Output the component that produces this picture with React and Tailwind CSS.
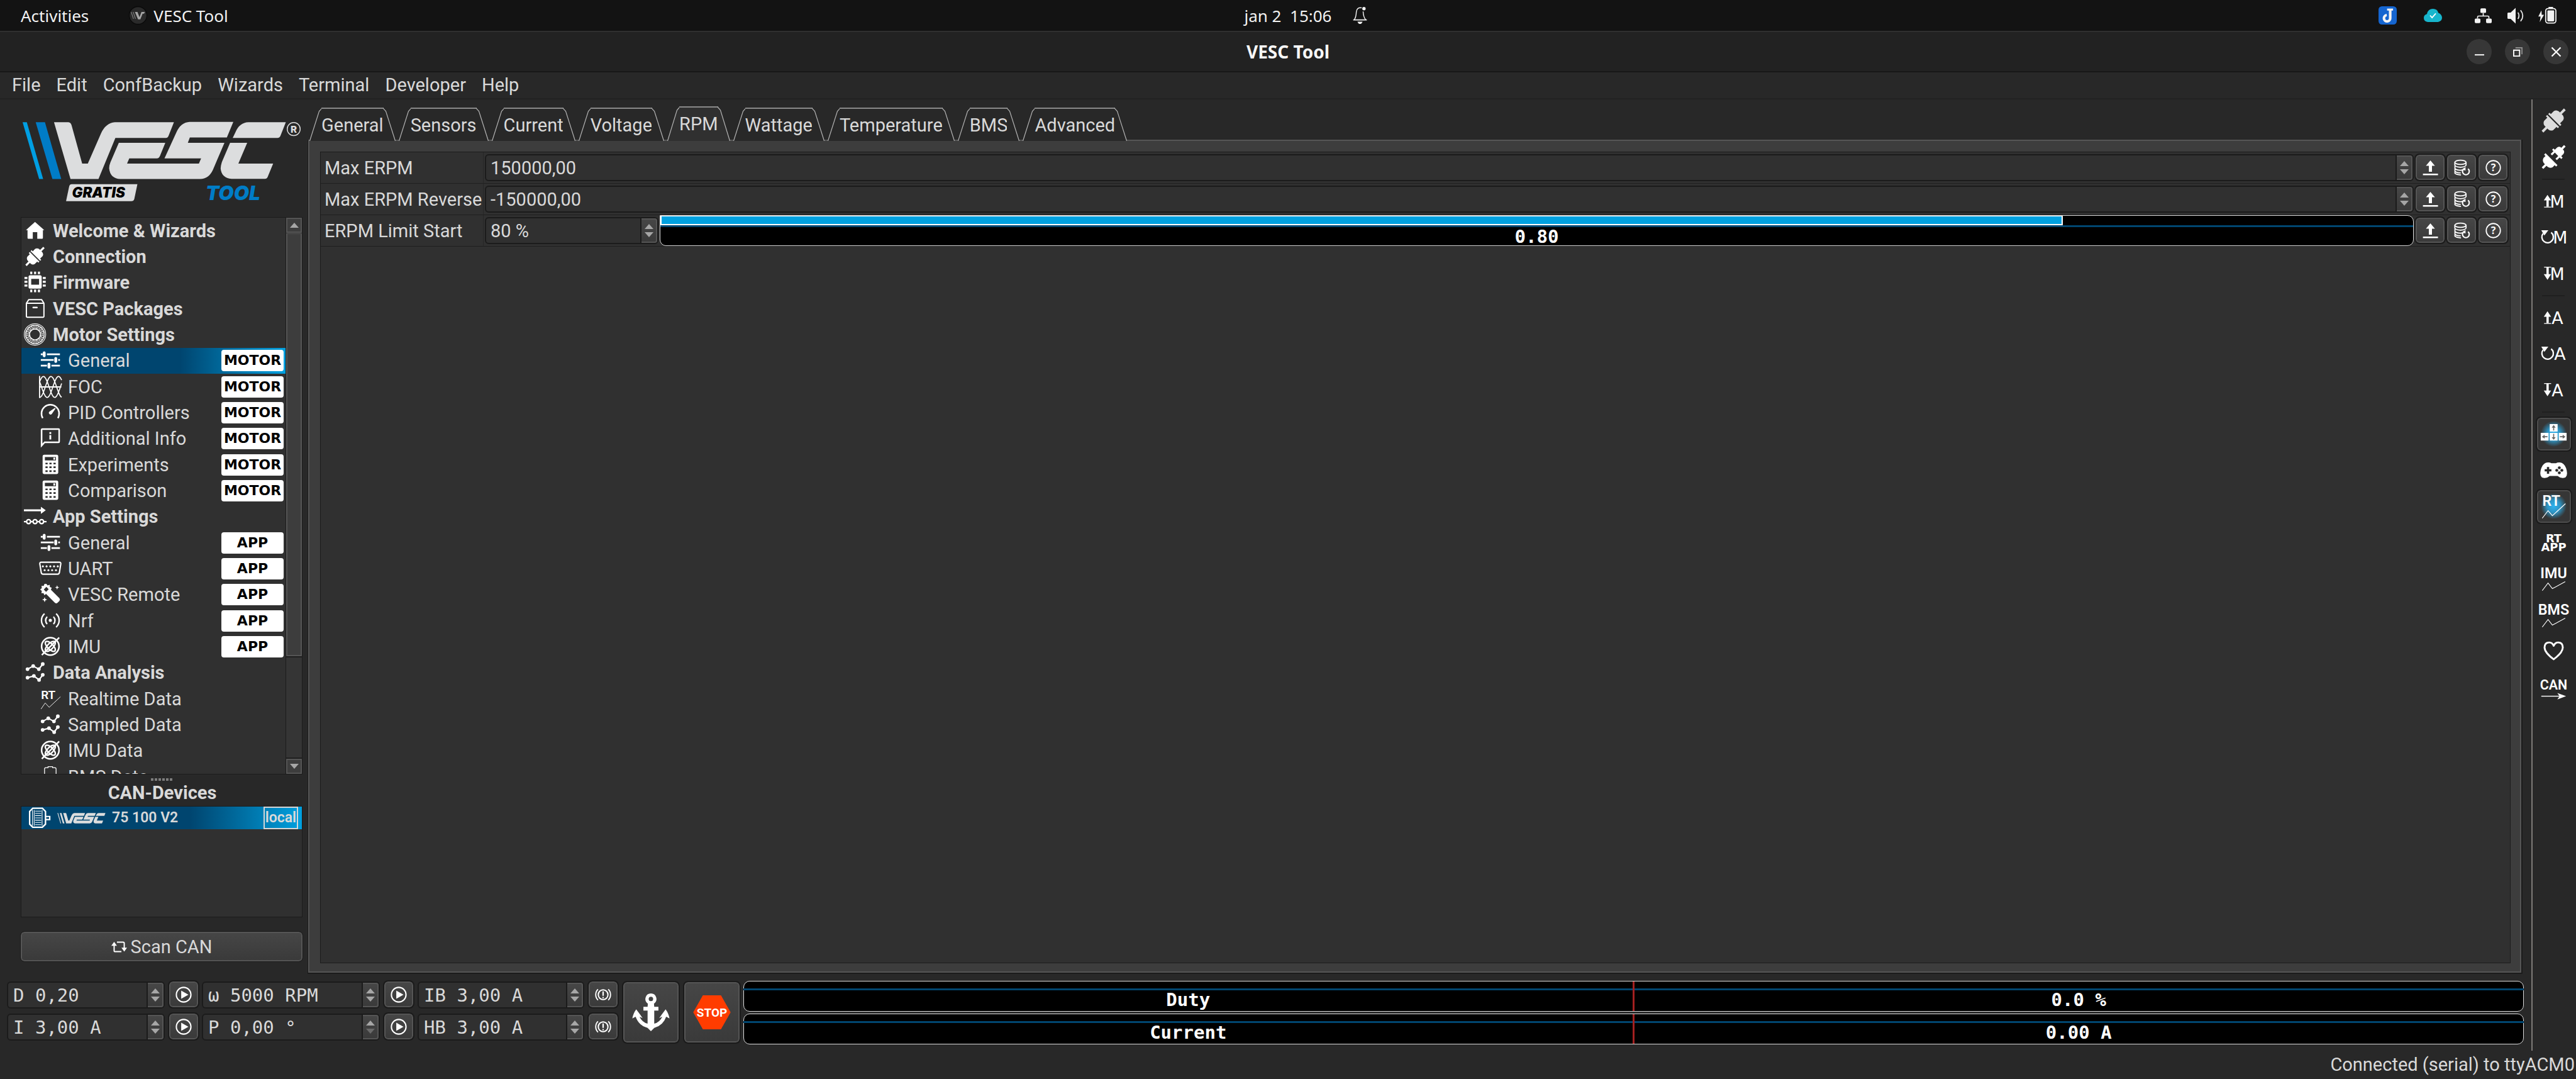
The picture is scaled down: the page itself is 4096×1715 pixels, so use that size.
import React from "react";

/* ---------- shared icon frame ---------- */

const Svg = ({ box = "0 0 40 40", className = "size-9", children }) => (
  <svg viewBox={box} className={className + " shrink-0 overflow-visible"} fill="none" aria-hidden="true">
    {children}
  </svg>
);

/* ---------- logo ---------- */

const WordmarkShapes = ({ first = "#009fe3", second = "#007cc6", fill = "#dcddde" }) => (
  <g transform="scale(0.35714 0.33333)">
    <path fill={first} d="M110 648H131L212 950H192Z" />
    <path fill={second} d="M175 648H221L302 950H258Z" />
    <path
      fill={fill}
      d="M266 648H338Q349 649 353 663L406 868H434L500 706Q524 652 568 648H862L836 718Q832 731 822 731H571L487 950H348Z"
    />
    <path
      fill={fill}
      d="M588 757H819L793 826Q788 840 777 840H640L629 868H986L997 840H815L874 702Q896 648 940 646H1157L1125 729H941L931 757H1113L1056 900Q1036 948 992 950H596Q545 948 540 893Q540 878 546 862Z"
    />
    <path fill={fill} d="M1154 731L1168 700Q1188 650 1232 648H1418L1392 718Q1388 731 1376 731Z" />
    <path
      fill={fill}
      d="M1141 757H1226L1182 868H1355L1328 938Q1324 949 1314 949H1148Q1098 945 1094 894Q1095 876 1100 860Z"
    />
  </g>
);

const Logo = () => (
  <svg viewBox="36 210 500 152" className="w-full" role="img" aria-label="VESC Tool Gratis">
    <WordmarkShapes />
    <ellipse cx="520.4" cy="228" rx="11.5" ry="11.5" fill="none" stroke="#dcddde" strokeWidth="1.6" />
    <text x="520.4" y="234" textAnchor="middle" fontSize="17" fontWeight="800" fill="#dcddde" className="font-['Inter',sans-serif]">R</text>
    <path fill="#dcddde" d="M126.4 325.7H243L237.5 352Q236.500 356 232 356H116.400L122 329.500Q123 325.700 126.400 325.700Z" />
    <text x="127" y="350" fontSize="25" fontWeight="900" fontStyle="italic" fill="#000" className="font-['Inter',sans-serif]">GRATIS</text>
    <text x="364" y="353.500" fontSize="35" fontWeight="900" fontStyle="italic" fill="#007cc6" className="font-['Inter',sans-serif]">TOOL</text>
  </svg>
);

/* ---------- navigation icons ---------- */

const HomeIcon = () => (
  <Svg>
    <path fill="#fff" d="M19.600 4.300L36 18.700H33.600V32.500a1.500 1.500 0 0 1-1.500 1.500H23.600V22.300H15.700V34H7.900a1.500 1.500 0 0 1-1.500-1.500V18.700H3.600Z" />
  </Svg>
);

const PlugShape = ({ fill = "#fff" }) => (
  <g transform="rotate(-45)" fill={fill}>
    <path d="M1.200-15H4.500V-11.500H12Q17-10.500 18-5V-2.200H28V2.200H18V5Q17 10.500 12 11.500H4.500V15H1.200Z" />
    <path d="M-1.200-15H-4.500V-11.500H-12Q-17-10.500-18-5V-2.200H-28V2.200H-18V5Q-17 10.500-12 11.500H-4.500V15H-1.200Z" />
  </g>
);

const ConnectionIcon = () => (
  <Svg>
    <g transform="translate(19.600 19.500) scale(0.8)">
      <PlugShape />
    </g>
  </Svg>
);

const ChipIcon = () => (
  <Svg>
    <path
      fill="#fff"
      fillRule="evenodd"
      d="M11 7.300H28.600a2.800 2.800 0 0 1 2.800 2.800V28a2.800 2.800 0 0 1-2.800 2.800H11A2.800 2.800 0 0 1 8.200 28V10.100A2.800 2.800 0 0 1 11 7.300ZM12.900 13.700V24H26.800V13.700Z"
    />
    <path stroke="#fff" strokeWidth="3.600" d="M13 .7V5.300M19.800 .7V5.300M26.600 .7V5.300M13 32.500V37.300M19.800 32.500V37.300M26.600 32.500V37.300M1 12H6.200M1 18.700H6.200M1 25.500H6.200M33.400 12H38.600M33.400 18.700H38.600M33.400 25.500H38.600" />
  </Svg>
);

const PackageIcon = () => (
  <Svg>
    <path stroke="#fff" strokeWidth="2.200" strokeLinejoin="round" d="M4.400 10L8.700 3.500H31.200L35.400 10V33a1.600 1.600 0 0 1-1.600 1.600H6A1.600 1.600 0 0 1 4.400 33ZM4.400 10H35.400" />
    <path stroke="#fff" strokeWidth="2.800" strokeLinecap="round" d="M16.500 17.500H23" />
  </Svg>
);

const MotorIcon = () => (
  <Svg>
    <circle cx="19.600" cy="19.500" r="19" stroke="#fff" strokeWidth="1.200" />
    <circle cx="19.600" cy="19.500" r="16.800" stroke="#fff" strokeWidth="0.900" />
    <circle cx="19.600" cy="19.500" r="9.500" stroke="#fff" strokeWidth="1.600" />
    {[0, 30, 60, 90, 120, 150, 180, 210, 240, 270, 300, 330].map((a) => (
      <g key={a} transform={`rotate(${a} 19.600 19.500)`}>
        <path stroke="#fff" strokeWidth="1.100" d="M17.600 10V4.800L15.600 3.500H23.600L21.600 4.800V10" />
        <path stroke="#fff" strokeWidth="1" opacity="0.700" d="M19.600 10V4.500" />
      </g>
    ))}
  </Svg>
);

const TuneIcon = () => (
  <Svg>
    <path stroke="#fff" strokeWidth="3" d="M3.200 9H6.500M14 9H37M3.200 19H26M34 19H37M3.200 29H14M22 29H37" />
    <path stroke="#fff" strokeWidth="5" strokeLinecap="round" d="M9.200 6.500V11.600M29.600 16.500V21.600M17.600 26.500V31.600" />
  </Svg>
);

const wave = (phase) =>
  Array.from({ length: 40 }, (_, x) => {
    const y = 20 - 18.5 * Math.sin((x * 2 * Math.PI) / 40 + phase);
    return `${x === 0 ? "M" : "L"}${x + 1} ${y.toFixed(1)}`;
  }).join("");

const FocIcon = () => (
  <Svg>
    <path stroke="#fff" strokeWidth="2" d="M1 0.500V39.500M1 20H39.500" />
    {[0.5, 2.594, 4.689].map((p) => (
      <path key={p} stroke="#fff" strokeWidth="1.900" d={wave(p)} />
    ))}
  </Svg>
);

const GaugeIcon = () => (
  <Svg>
    <path stroke="#fff" strokeWidth="2.800" d="M6.600 29.500A15.600 15.600 0 1 1 33.400 29.500" />
    <path fill="#fff" d="M28.200 11.500L29.300 12.600L22.600 22.300A3 3 0 1 1 18.400 18Z" />
  </Svg>
);

const InfoIcon = () => (
  <Svg>
    <path fill="#fff" fillRule="evenodd" d="M5.500 2H34.500A2.500 2.500 0 0 1 37 4.500V25.500A2.500 2.500 0 0 1 34.500 28H10.500L3.200 36V4.500A2.500 2.500 0 0 1 5.500 2ZM6 4.700V29L9.500 25.300H34.300V4.700Z" />
    <path stroke="#fff" strokeWidth="3.200" d="M20 8.500V12M20 14V21.700" />
  </Svg>
);

const CalculatorIcon = () => (
  <Svg>
    <rect x="6.400" y="2" width="27.600" height="34" rx="3" fill="#fff" />
    <path fill="#303030" d="M10.400 6H30V12H10.400Z" />
    <path fill="#fff" d="M25.400 7H28.600V10.700H25.400Z" />
    <path stroke="#303030" strokeWidth="3" d="M11.400 17.500H15.300M18.400 17.500H22.300M25.600 17.500H29.500M11.400 24H15.300M18.400 24H22.300M25.600 24H29.500M11.400 31H15.300M18.400 31H22.300M25.600 31H29.500" />
  </Svg>
);

const AppIcon = () => (
  <Svg>
    <path stroke="#fff" strokeWidth="3.400" d="M0 9H31" />
    <path fill="#fff" d="M30 2.700L38.600 9L30 15.300Z" />
    <path stroke="#fff" strokeWidth="2.600" d="M0 29H5M12 29H16M23.500 29H28M35 29H40" />
    {[8.3, 19.7, 31.3].map((x) => (
      <circle key={x} cx={x} cy="29" r="3.600" stroke="#fff" strokeWidth="2.600" />
    ))}
  </Svg>
);

const UartIcon = () => (
  <Svg>
    <path stroke="#fff" strokeWidth="2.400" strokeLinejoin="round" d="M4 8.500H36Q39 8.500 38.500 11.500L36 27Q35.500 29.500 33 29.500H7Q4.500 29.500 4 27L1.500 11.500Q1 8.500 4 8.500Z" />
    {[6.8, 13.4, 20, 26.6, 33.2].map((x) => (
      <circle key={x} cx={x} cy="15.700" r="1.700" fill="#fff" />
    ))}
    {[10, 16.6, 23.2, 30].map((x) => (
      <circle key={x} cx={x} cy="22.400" r="1.700" fill="#fff" />
    ))}
  </Svg>
);

const WandIcon = () => (
  <Svg>
    <path
      fill="#fff"
      fillRule="evenodd"
      d="M13 1L15.200 4L19 2.800L19.200 6.600L22.500 8L21 11.300L36 26.500Q38 29 36 31.500L32.500 34.800Q30.500 36.500 28 34.500L12.500 19L9.500 21L8 17.500L4.200 17.500L5 13.500L2 11L5 8.600L4.400 4.600L8.300 4.600L9.800 1.200ZM13 6.500L8.500 11.200L12.500 15.200L17.200 10.600Z"
    />
    <path fill="#fff" d="M32 3.500L33 6.400L35.800 7.400L33 8.400L32 11.300L31 8.400L28.200 7.400L31 6.400ZM10 24.500L11.200 27.900L14.500 29L11.200 30.200L10 33.600L8.800 30.200L5.500 29L8.800 27.900Z" />
  </Svg>
);

const RadioIcon = () => (
  <Svg>
    <circle cx="20" cy="19" r="2.800" fill="#fff" />
    <path stroke="#fff" strokeWidth="2.600" d="M14.500 12.500A9 9 0 0 0 14.500 25.500M25.500 12.500A9 9 0 0 1 25.500 25.500M9.800 7A16 16 0 0 0 9.800 31M30.200 7A16 16 0 0 1 30.200 31" />
  </Svg>
);

const ImuIcon = () => (
  <Svg>
    <circle cx="20" cy="19.300" r="15.400" stroke="#fff" strokeWidth="2.800" />
    <path stroke="#fff" strokeWidth="2.800" d="M5 34.500L35.700 3.700" />
    <ellipse cx="20" cy="19.300" rx="11.500" ry="5" stroke="#fff" strokeWidth="2.600" transform="rotate(45 20 19.300)" />
    <ellipse cx="20" cy="19.300" rx="11.500" ry="5" stroke="#fff" strokeWidth="2.600" transform="rotate(-45 20 19.300)" />
  </Svg>
);

const GraphIcon = () => (
  <Svg>
    <path stroke="#fff" strokeWidth="2.400" d="M6.400 14L16.400 8.500L26.400 14L33.300 5M6.400 29L17.600 26L26.800 33L33.300 24" />
    {[[6.4, 14], [16.4, 8.5], [26.4, 14], [33.3, 5], [6.4, 29], [17.6, 26], [26.8, 33], [33.3, 24]].map(([x, y]) => (
      <circle key={`${x}-${y}`} cx={x} cy={y} r="3.200" fill="#fff" />
    ))}
  </Svg>
);

const LABEL_FONT = "font-['Roboto',sans-serif]";

const RealtimeIcon = () => (
  <Svg>
    <text x="3.500" y="20" fontSize="21" fontWeight="600" fill="#fff" className={LABEL_FONT}>RT</text>
    <path stroke="#fff" strokeWidth="1" d="M3.600 37.700L11 27L18 34.700L38 16" />
  </Svg>
);

const BatteryIcon = () => (
  <Svg>
    <path stroke="#fff" strokeWidth="1.400" d="M9.800 36V6Q9.800 3.600 12 3.600H16V1.700H24V3.600H28Q30.200 3.600 30.200 6V36Z" />
  </Svg>
);

/* ---------- navigation ---------- */

const NAV = [
  ["Welcome & Wizards", HomeIcon],
  ["Connection", ConnectionIcon],
  ["Firmware", ChipIcon],
  ["VESC Packages", PackageIcon],
  ["Motor Settings", MotorIcon],
  ["General", TuneIcon, "MOTOR", true],
  ["FOC", FocIcon, "MOTOR"],
  ["PID Controllers", GaugeIcon, "MOTOR"],
  ["Additional Info", InfoIcon, "MOTOR"],
  ["Experiments", CalculatorIcon, "MOTOR"],
  ["Comparison", CalculatorIcon, "MOTOR"],
  ["App Settings", AppIcon],
  ["General", TuneIcon, "APP"],
  ["UART", UartIcon, "APP"],
  ["VESC Remote", WandIcon, "APP"],
  ["Nrf", RadioIcon, "APP"],
  ["IMU", ImuIcon, "APP"],
  ["Data Analysis", GraphIcon],
  ["Realtime Data", RealtimeIcon, ""],
  ["Sampled Data", GraphIcon, ""],
  ["IMU Data", ImuIcon, ""],
  ["BMS Data", BatteryIcon, ""],
];

const NavRow = ({ label, Icon, badge, selected }) => {
  const child = badge !== undefined;
  return (
    <li className={"flex " + (selected ? "bg-linear-to-r from-[#00456f] from-60% to-[#00a1e0]" : "")}>
      <button type="button" className={"flex w-full items-center gap-2 pr-[3px] text-left " + (child ? "pl-7" : "pl-1 font-bold")}>
        <Icon />
        <span className="grow whitespace-nowrap pl-0.5">{label}</span>
        {badge ? (
          <span className="flex h-[34px] w-[99px] items-center justify-center rounded-sm bg-white font-['DejaVu_Sans',sans-serif] text-[22px] font-bold text-black">
            {badge}
          </span>
        ) : null}
      </button>
    </li>
  );
};

const Triangle = ({ down, dim }) => (
  <svg viewBox="0 0 16 9" className="h-2 w-3.5 shrink-0" aria-hidden="true">
    <path fill={dim ? "#6a6a6a" : "#a6a6a6"} d={down ? "M0 0H16L8 9Z" : "M8 0L16 9H0Z"} />
  </svg>
);

const ScrollBar = () => (
  <div className="flex w-[26px] shrink-0 flex-col border-l border-[#1c1c1c] bg-[#353535]">
    <button type="button" aria-label="Scroll up" className="flex h-6 items-center justify-center border-2 border-[#555] bg-[#3d3d3d]">
      <Triangle />
    </button>
    <div className="mt-px h-[672px] border-2 border-t border-[#555] bg-[#3d3d3d]" />
    <div className="grow border-y-2 border-[#1f1f1f]" />
    <button type="button" aria-label="Scroll down" className="flex h-6 items-center justify-center border-2 border-[#555] bg-[#3d3d3d]">
      <Triangle down />
    </button>
  </div>
);

const Sidebar = () => (
  <aside className="flex w-[489px] shrink-0 flex-col pt-[31px] pr-2 pb-5 pl-[33px]">
    <Logo />
    <nav className="mt-5 flex min-h-0 grow basis-0 border border-[#1c1c1c] bg-[#303030]">
      <div className="grow overflow-hidden">
        <ul className="grid h-[909px] auto-rows-fr">
          {NAV.map(([label, Icon, badge, selected], i) => (
            <NavRow key={i} label={label} Icon={Icon} badge={badge} selected={selected} />
          ))}
        </ul>
      </div>
      <ScrollBar />
    </nav>
    <div className="flex h-4 items-center justify-center gap-[2px]">
      {[0, 1, 2, 3, 4, 5].map((i) => (
        <span key={i} className="size-[4px] bg-[#7d7d7d]" />
      ))}
    </div>
    <h2 className="h-[34px] pl-0.5 text-center font-bold leading-[26px]">CAN-Devices</h2>
    <ul className="h-[177px] border border-[#1c1c1c] bg-[#303030]">
      <li className="flex h-9 items-center bg-linear-to-r from-[#00456f] from-60% to-[#00a1e0] pr-1.5 pl-2.5 text-[23px] font-medium">
        <Svg>
          <path stroke="#fff" strokeWidth="2.600" d="M9 3H26L31.500 8.500V31L26 36.500H9L3.500 31V8.500Z" />
          <path stroke="#fff" strokeWidth="1.200" d="M8.500 6V34M11.500 6V34M25.500 6V34M13 8H24M13 12H24M13 16H24M13 20H24M13 24H24M13 28H24M13 32H24" />
          <path stroke="#fff" strokeWidth="2.400" d="M32 17.500H39V23H32" />
        </Svg>
        <svg viewBox="36 214 480 104" className="ml-2.5 h-[17px] w-[80px] shrink-0" role="img" aria-label="VESC">
          <WordmarkShapes first="#dcddde" second="#dcddde" />
        </svg>
        <span className="grow pl-2 font-semibold">75 100 V2</span>
        <span className="border-2 border-[#d6d6d6] px-px font-semibold leading-8">local</span>
      </li>
    </ul>
    <button
      type="button"
      className="mt-[23px] flex h-[47px] items-center justify-center gap-1.5 rounded-md border-2 border-[#555] bg-linear-to-b from-[#464646] to-[#3a3a3a] outline outline-[#1b1b1b]"
    >
      <Svg box="0 0 28 20" className="h-[18px] w-[25px]">
        <path stroke="#fff" strokeWidth="2.200" d="M5 6V17Q5 18.500 7 18.500H18M10 1.500H21Q23 1.500 23 3.500V13" />
        <path fill="#fff" d="M0 8L5 1L10 8ZM18 11.500H28L23 18.500Z" />
      </Svg>
      Scan CAN
    </button>
  </aside>
);

/* ---------- tabs ---------- */

const TABS = ["General", "Sensors", "Current", "Voltage", "RPM", "Wattage", "Temperature", "BMS", "Advanced"];

const TabEdge = ({ flip, fill }) => (
  <svg viewBox="0 0 20 54" preserveAspectRatio="none" className={"h-full w-5 shrink-0 " + (flip ? "-scale-x-100" : "")} aria-hidden="true">
    <path fill={fill} d="M0 54L15.500 5L20 1V54Z" />
    <path fill="none" stroke="#b4b4b4" strokeWidth="1.200" d="M0.500 54L15.500 6L20 1" />
  </svg>
);

const Tab = ({ label, selected }) => {
  const fill = selected ? "#303030" : "#282828";
  return (
    <button type="button" role="tab" aria-selected={selected} className={"flex " + (selected ? "h-[55px]" : "h-[53px]")}>
      <TabEdge fill={fill} />
      <span className={"-mx-px h-full border-t-2 border-[#8a8a8a] leading-[52px] " + (selected ? "bg-[#303030]" : "bg-[#282828]")}>{label}</span>
      <TabEdge fill={fill} flip />
    </button>
  );
};

/* ---------- form controls ---------- */

const Spin = ({ name, dimDown }) => (
  <span className="flex w-[25px] shrink-0 flex-col rounded-r-sm border-y-2 border-r-2 border-[#555] bg-linear-to-b from-[#464646] to-[#3a3a3a]">
    <button type="button" aria-label={name + " up"} className="flex grow basis-0 items-center justify-center pt-1">
      <Triangle />
    </button>
    <button type="button" aria-label={name + " down"} className="flex grow basis-0 items-center justify-center pb-1">
      <Triangle down dim={dimDown} />
    </button>
  </span>
);

const Field = ({ id, name, value, className, dimDown, inputClass = "pl-[7px]" }) => (
  <span className={"flex min-w-0 rounded-md border-2 border-[#1b1b1b] bg-[#303030] " + className}>
    <input
      id={id}
      aria-label={name}
      defaultValue={value}
      className={"w-0 min-w-0 grow border-r-2 border-[#1b1b1b] bg-transparent outline-none " + inputClass}
    />
    <Spin name={name} dimDown={dimDown} />
  </span>
);

const ToolButton = ({ name, className, children }) => (
  <button
    type="button"
    aria-label={name}
    className={"flex shrink-0 items-center justify-center rounded-md border-2 border-[#555] bg-linear-to-b from-[#464646] to-[#3a3a3a] outline-2 outline-[#1b1b1b] " + className}
  >
    {children}
  </button>
);

const UploadIcon = () => (
  <Svg box="0 0 28 28" className="size-[25px]">
    <path fill="#fff" d="M14 1L22 10.700H16.800V21.300H11.200V10.700H6ZM.7 24.700H27.500V27.400H.7Z" />
  </Svg>
);

const DatabaseIcon = () => (
  <Svg box="0 0 28 28" className="size-[25px]">
    <g stroke="#fff" strokeWidth="2">
      <ellipse cx="11.500" cy="4.500" rx="10" ry="3.800" />
      <path d="M1.500 4.500V9.500Q3 13 11.500 13.200Q20 13 21.500 9.500V4.500M1.700 10.500V15.500Q4 18.300 11.500 18.500L15 18.200M1.700 16V20.500Q4 23 12 23.300M1.700 21V24Q4 26.500 12.500 27" />
      <path strokeWidth="2.400" d="M18 15.500A6 6 0 1 0 25 16" />
    </g>
    <path fill="#fff" d="M20.500 12.500V19L15 17.500Z" />
  </Svg>
);

const HelpIcon = () => (
  <Svg box="0 0 28 28" className="size-[25px]">
    <circle cx="14" cy="14" r="12.600" stroke="#fff" strokeWidth="2" />
    <text x="14" y="20.500" textAnchor="middle" fontSize="18" fontWeight="700" fill="#fff" className="font-['Open_Sans',sans-serif]">?</text>
  </Svg>
);

const RowButtons = ({ name }) => (
  <span className="flex gap-[4px] pt-1 pr-1 pb-1 pl-[3px]">
    <ToolButton name={"Read " + name} className="h-[40px] w-[46px]"><UploadIcon /></ToolButton>
    <ToolButton name={"Read default " + name} className="h-[40px] w-[46px]"><DatabaseIcon /></ToolButton>
    <ToolButton name={"Help on " + name} className="h-[40px] w-[46px]"><HelpIcon /></ToolButton>
  </span>
);

const FormRow = ({ id, label, children }) => (
  <div className="flex h-[50px] border-b border-[#1f1f1f]">
    <label htmlFor={id} className="flex w-[259px] shrink-0 items-center border-r border-[#262626] pl-[6px] whitespace-nowrap">
      {label}
    </label>
    {children}
    <RowButtons name={label} />
  </div>
);

const LimitBar = () => (
  <div className="flex grow flex-col overflow-hidden rounded-[10px] rounded-tl-none border border-[#dcdcdc] bg-black">
    <div className="h-[15px] shrink-0">
      <div className="h-full w-4/5 border-2 border-t border-white bg-[#00a1e0]" />
    </div>
    <div className="h-[3px] shrink-0 bg-[#004670]" />
    <div className="min-h-0 grow text-center font-['DejaVu_Sans_Mono',monospace] font-bold leading-[31px] text-white">0.80</div>
  </div>
);

const Meter = ({ label, value }) => (
  <div className="flex h-[49px] flex-col rounded-[10px] border border-[#dcdcdc] bg-black">
    <div className="grid grow grid-cols-2 grid-rows-[11px_3px_1fr] font-['DejaVu_Sans_Mono',monospace] font-bold text-white">
      <span className="border-r-2 border-[#a32020]" />
      <span className="border-l border-[#a32020]" />
      <span className="-ml-px border-r-2 border-[#a32020] bg-[#004670]" />
      <span className="-mr-px border-l border-[#a32020] bg-[#004670]" />
      <span className="border-r-2 border-[#a32020] text-center leading-[31px]">{label}</span>
      <span className="border-l border-[#a32020] text-center leading-[31px]">{value}</span>
    </div>
  </div>
);

/* ---------- bottom controls ---------- */

const PlayIcon = () => (
  <Svg box="0 0 28 28" className="size-[26px]">
    <circle cx="14" cy="14" r="12.500" stroke="#fff" strokeWidth="2.200" />
    <path fill="#fff" d="M9.800 7L22.200 14L9.800 21Z" />
  </Svg>
);

const BrakeIcon = () => (
  <Svg box="0 0 30 28" className="h-6 w-[26px]">
    <circle cx="15" cy="14" r="9" stroke="#fff" strokeWidth="2.400" />
    <path stroke="#fff" strokeWidth="2.600" d="M15 8V16M15 18V20.500" />
    <path stroke="#fff" strokeWidth="2.200" d="M5.500 4A14 14 0 0 0 5.500 24M24.500 4A14 14 0 0 1 24.500 24" />
  </Svg>
);

const AnchorIcon = () => (
  <Svg box="0 0 68 68" className="size-[60px]">
    <path
      fill="#fff"
      fillRule="evenodd"
      d="M34 0A10 10 0 0 1 39.500 18.300L40 24H47.500V31H40V54.500Q50 52 54.500 42L49 44.500Q54 37 60.500 28.500Q66 36 67.500 45L61.500 42Q56 58 40 62L34 68L28 62Q12 58 6.500 42L.5 45Q2 36 7.500 28.500Q14 37 19 44.500L13.500 42Q18 52 28 54.500V31H20.500V24H28L28.500 18.300A10 10 0 0 1 34 0ZM34 6A4 4 0 1 0 34 14A4 4 0 1 0 34 6Z"
    />
  </Svg>
);

const StopIcon = () => (
  <Svg box="0 0 66 60" className="h-[54px] w-[60px]">
    <path fill="#ff3c00" d="M17 0H49L66 30L49 60H17L0 30Z" />
    <text x="33" y="37.500" textAnchor="middle" fontSize="21" fontWeight="700" fill="#fff" className={LABEL_FONT}>STOP</text>
  </Svg>
);

const Controls = () => {
  const mono = "h-[43px] font-['DejaVu_Sans_Mono',monospace]";
  const input = "pl-2";
  const column = "grid shrink-0 content-start gap-x-[5px] gap-y-2 grid-cols-[minmax(0,1fr)_auto] pt-px";
  const push = "ml-0.5 h-[41px] w-[46px]";
  return (
    <div className="flex h-[122px] pt-[11px] pr-3 pl-[11px]">
      <div className={column + " w-[304px]"}>
        <Field name="Duty cycle" value="D 0,20" className={mono} inputClass={input} />
        <ToolButton name="Run duty" className={push}><PlayIcon /></ToolButton>
        <Field name="Current" value="I 3,00 A" className={mono} inputClass={input} />
        <ToolButton name="Run current" className={push}><PlayIcon /></ToolButton>
      </div>
      <div className={column + " ml-[6px] w-[336px]"}>
        <Field name="Speed" value="ω 5000 RPM" className={mono} inputClass={input} />
        <ToolButton name="Run speed" className={push}><PlayIcon /></ToolButton>
        <Field name="Position" value="P 0,00 °" className={mono} inputClass={input} dimDown />
        <ToolButton name="Run position" className={push}><PlayIcon /></ToolButton>
      </div>
      <div className={column + " ml-[7px] w-[318px]"}>
        <Field name="Brake current" value="IB 3,00 A" className={mono} inputClass={input} />
        <ToolButton name="Brake" className={push}><BrakeIcon /></ToolButton>
        <Field name="Handbrake current" value="HB 3,00 A" className={mono} inputClass={input} />
        <ToolButton name="Handbrake" className={push}><BrakeIcon /></ToolButton>
      </div>
      <ToolButton name="Full brake" className="mt-[2px] ml-[9px] h-[96px] w-[88px]"><AnchorIcon /></ToolButton>
      <ToolButton name="Stop" className="mt-[2px] ml-[9px] h-[96px] w-[88px]"><StopIcon /></ToolButton>
      <div className="ml-[6px] flex grow flex-col gap-[3px]">
        <Meter label="Duty" value="0.0 %" />
        <Meter label="Current" value="0.00 A" />
      </div>
    </div>
  );
};

/* ---------- right tool bar ---------- */

const Glyph = ({ children }) => (
  <Svg box="0 0 48 48" className="size-[43px]">{children}</Svg>
);

const Letter = ({ x, children }) => (
  <text x={x} y="35.300" fontSize="30" fill="#fff" className="font-['DejaVu_Sans',sans-serif]">{children}</text>
);

const UpArrow = () => (
  <>
    <path fill="#fff" d="M13 13L19.500 23H15.200V34H11.200V23H6.500Z" />
    <path stroke="#fff" strokeWidth="1.400" d="M7 34.800H19.500" />
  </>
);

const DownArrow = () => (
  <>
    <path fill="#fff" d="M13 35.500L19.500 25.500H15.200V13H11.200V25.500H6.500Z" />
    <path stroke="#fff" strokeWidth="1.400" d="M7 13H19.500" />
  </>
);

const Reload = () => (
  <>
    <path stroke="#fff" strokeWidth="2.600" d="M5.200 18A10.200 10.200 0 1 0 19.500 16.200" />
    <path fill="#fff" d="M2 12.300H14.500L7.500 21.500Z" />
  </>
);

const Word = ({ y = 23, size = 26, className = LABEL_FONT, children }) => (
  <text x="24" y={y} textAnchor="middle" fontSize={size} fontWeight="600" fill="#fff" className={className}>{children}</text>
);

const Glow = ({ id }) => (
  <>
    <defs>
      <radialGradient id={id}>
        <stop offset="0" stopColor="#2cb2f0" />
        <stop offset="0.500" stopColor="#2cb2f0" stopOpacity="0.750" />
        <stop offset="1" stopColor="#2cb2f0" stopOpacity="0" />
      </radialGradient>
    </defs>
    <circle cx="24" cy="24" r="23" fill={`url(#${id})`} />
  </>
);

const TOOL_GROUPS = [
  [
    "h-[115px]",
    [
      ["Reconnect", <g transform="translate(24 24)"><PlugShape fill="#dcdcdc" /></g>],
      [
        "Disconnect",
        <g transform="translate(24 24) rotate(-45)" fill="#fff">
          <path d="M7-11H10.500V-7.500H16Q20-7 21-4V-2H28V2H21V4Q20 8 16 8.500H10.500V12H7V8H0V4.500H7V-4H0V-7.500H7Z" />
          <path d="M-9-15H-5.500V15H-9V11.500H-14Q-19 10-20 5V2H-28V-2H-20V-5Q-19-10-14-11.500H-9Z" />
        </g>,
      ],
    ],
  ],
  [
    "h-[172px]",
    [
      ["Read motor configuration", <><UpArrow /><Letter x="17.300">M</Letter></>],
      ["Read default motor configuration", <><Reload /><Letter x="22.500">M</Letter></>],
      ["Write motor configuration", <><DownArrow /><Letter x="17.300">M</Letter></>],
    ],
  ],
  [
    "h-[172px]",
    [
      ["Read app configuration", <><UpArrow /><Letter x="20.300">A</Letter></>],
      ["Read default app configuration", <><Reload /><Letter x="24.700">A</Letter></>],
      ["Write app configuration", <><DownArrow /><Letter x="20.300">A</Letter></>],
    ],
  ],
  [
    "h-[460px]",
    [
      [
        "Keyboard control",
        <>
          <Glow id="glow-keys" />
          <path fill="#fff" d="M17 6.600H31V20H17ZM1 22.300H15V36H1ZM17 22.300H31V36H17ZM33 22.300H47V36H33Z" />
          <path stroke="#666" strokeWidth="1.800" d="M24 18V12M24 24V31M13 29.200H6M35 29.200H42" />
          <path fill="#666" d="M20.500 13L24 8.500L27.500 13ZM20.500 30L24 34.500L27.500 30ZM8 25.700L3 29.200L8 32.700ZM40 25.700L45 29.200L40 32.700Z" />
        </>,
        true,
      ],
      [
        "Gamepad control",
        <>
          <path fill="#fff" d="M14 10Q18 10 20 11.500H28Q30 10 34 10Q42 10 46 20Q50 32 45 36.500Q38 40 31 34H17Q10 40 3 36.500Q-2 32 2 20Q6 10 14 10Z" />
          <path fill="#282828" d="M12 18H16V22H20V26H16V30H12V26H8V22H12Z" />
          <g fill="#282828">
            <circle cx="34" cy="19.500" r="2.600" />
            <circle cx="34" cy="28.500" r="2.600" />
            <circle cx="29.500" cy="24" r="2.600" />
            <circle cx="38.500" cy="24" r="2.600" />
          </g>
        </>,
      ],
      [
        "Realtime data",
        <>
          <Glow id="glow-rt" />
          <text x="4" y="23" fontSize="26" fontWeight="600" fill="#fff" className={LABEL_FONT}>RT</text>
          <path stroke="#fff" strokeWidth="1.300" d="M3.700 45.500L14 32L21.700 41L45 19.500" />
        </>,
        true,
      ],
      [
        "Realtime app data",
        <>
          <Word y="23" size="20" className="font-['DejaVu_Sans',sans-serif]">RT</Word>
          <Word y="39.500" size="20" className="font-['DejaVu_Sans',sans-serif]">APP</Word>
        </>,
      ],
      ["IMU data", <><Word>IMU</Word><path stroke="#fff" strokeWidth="1.300" d="M3.700 45.500L14 32L21.700 42L44.500 29.700" /></>],
      ["BMS data", <><Word>BMS</Word><path stroke="#fff" strokeWidth="1.300" d="M3.700 45.500L14 32L21.700 42L44.500 29.700" /></>],
      [
        "CAN alive",
        <path stroke="#fff" strokeWidth="3.200" strokeLinejoin="round" d="M24 39Q8 27 7.800 18Q8 9 16 9Q21.500 9 24 15Q26.500 9 32 9Q40 9 40.200 18Q40 27 24 39Z" />,
      ],
      ["CAN forward", <><Word y="28" size="24">CAN</Word><path stroke="#fff" strokeWidth="1.600" d="M2 39.700H36" /><path fill="#fff" d="M46 39.700L30.500 34L34.500 39.700L30.500 45.500Z" /></>],
    ],
  ],
];

const ToolBar = () => (
  <div role="toolbar" aria-label="Main tools" className="flex w-[71px] shrink-0 flex-col border-l-2 border-[#7d7a78] pt-[5px]">
    {TOOL_GROUPS.map(([height, items], g) => (
      <React.Fragment key={g}>
        {g > 0 ? <div className="mr-1 flex h-[13px] shrink-0 items-center justify-center"><span className="h-0.5 w-9 bg-[#202020]" /></div> : null}
        <div className={"mr-0.5 grid shrink-0 auto-rows-fr justify-center " + height}>
          {items.map(([name, drawing, on]) => (
            <button
              key={name}
              type="button"
              aria-label={name}
              aria-pressed={!!on}
              className={
                "flex w-[54px] items-center justify-center rounded-md " +
                (on ? "my-[3px] border-2 border-[#4d4d4d] bg-[#363636] outline-2 outline-[#1b1b1b]" : "")
              }
            >
              <Glyph>{drawing}</Glyph>
            </button>
          ))}
        </div>
      </React.Fragment>
    ))}
  </div>
);

/* ---------- desktop bars ---------- */

const TopBar = () => (
  <header className="grid h-[49px] shrink-0 grid-cols-[1fr_auto_1fr] items-center bg-[#131313] font-['Noto_Sans',sans-serif] text-[26px] text-[#f2f2f2]">
    <div className="flex items-center pl-[33px]">
      <button type="button">Activities</button>
      <button type="button" className="ml-[64px] flex items-center gap-2.5">
        <Svg box="0 0 32 32" className="size-[29px]">
          <circle cx="16" cy="16" r="15.500" fill="#2a2a2a" stroke="#0a0a0a" strokeWidth="1.500" />
          <path stroke="#8a8a8a" strokeWidth="1.200" d="M4 10L8 22M7.500 10L11.500 22" />
          <path fill="#a5a5a5" d="M10.500 10H15L18.500 19L22 10H28L26.500 13H24L20 23H16Z" />
        </Svg>
        VESC Tool
      </button>
    </div>
    <button type="button" className="flex items-center gap-[34px]">
      <span className="w-[23px]" />
      <span className="whitespace-pre">jan 2  15:06</span>
      <Svg box="0 0 24 30" className="h-[27px] w-[23px]">
        <path stroke="#f2f2f2" strokeWidth="1.600" d="M15 1.600Q6 .5 5.500 9Q5 18 2 22.500M17.500 8Q18 18 22 22.500" />
        <path fill="#f2f2f2" d="M0 22H24V24H0ZM7.500 26H16.500Q15 30 12 30T7.500 26Z" />
        <circle cx="19" cy="3" r="3" fill="#f2f2f2" />
      </Svg>
    </button>
    <div className="flex items-center justify-end pr-[31px]">
      <Svg box="0 0 32 32" className="size-[29px]">
        <rect width="32" height="32" rx="6" fill="#1565d0" />
        <path stroke="#f4f4f4" strokeWidth="4.600" d="M20.500 5V20.500A5.500 5.500 0 1 1 14.500 15.500" />
        <path fill="#f4f4f4" d="M15 4H25.500V7.500H15Z" />
      </Svg>
      <Svg box="0 0 32 23" className="mr-[52px] ml-[43px] h-[21px] w-[29px]">
        <path fill="#17b5cc" d="M7 23Q0 22.500 0 16Q0 10.500 5.500 9Q7.500 0 16 0Q23.500 0 25.500 7Q32 9.500 32 16Q31.500 22 25 23Z" />
        <path stroke="#fff" strokeWidth="2" d="M11 11.500L14.500 15.500L21 8" />
      </Svg>
      <Svg box="0 0 30 26" className="h-6 w-[27px]">
        <path fill="#f2f2f2" d="M12 0H18Q20 0 20 2V7Q20 8 18 8H12Q10 8 10 7V2Q10 0 12 0ZM2 18H8Q10 18 10 20V24Q10 26 8 26H2Q0 26 0 24V20Q0 18 2 18ZM22 18H28Q30 18 30 20V24Q30 26 28 26H22Q20 26 20 24V20Q20 18 22 18Z" />
        <path stroke="#f2f2f2" strokeWidth="1.800" d="M15 8V13M5 18V15Q5 13.500 7 13.500H23Q25 13.500 25 15V18" />
      </Svg>
      <Svg box="0 0 28 28" className="ml-[25px] size-[26px]">
        <path fill="#f2f2f2" d="M0 10Q0 8.500 2 8.500H5.500L14 .5V27.500L5.500 19.500H2Q0 19.500 0 18Z" />
        <path stroke="#f2f2f2" strokeWidth="1.800" d="M18 8.500Q21.500 14 18 19.500M22.500 4.500Q30 14 22.500 23.500" />
      </Svg>
      <Svg box="0 0 32 30" className="ml-[23px] h-[27px] w-[29px]">
        <path fill="#f2f2f2" d="M5.500 6L0 17H4L2.500 27L10 14H6ZM18 0H26V3H18Z" />
        <rect x="13" y="3" width="18" height="25.500" rx="4" stroke="#f2f2f2" strokeWidth="2" />
        <rect x="16" y="6" width="12" height="19.500" rx="1.500" fill="#f2f2f2" />
      </Svg>
    </div>
  </header>
);

const TitleBar = () => (
  <div className="grid h-[66px] shrink-0 grid-cols-[1fr_auto_1fr] items-center border-t-2 border-b-2 border-t-[#2f2f2f] border-b-[#171717] bg-[#222]">
    <h1 className="col-start-2 font-['Noto_Sans',sans-serif] text-[28px] font-bold text-[#f7f7f7]">VESC Tool</h1>
    <div className="flex justify-end gap-[21px] pr-3">
      <button type="button" aria-label="Minimize" className="flex size-10 items-center justify-center rounded-full bg-[#373737]">
        <Svg box="0 0 16 16" className="size-[15px]"><path stroke="#fff" strokeWidth="2" d="M0 13H16" /></Svg>
      </button>
      <button type="button" aria-label="Restore" className="flex size-10 items-center justify-center rounded-full bg-[#373737]">
        <Svg box="0 0 16 16" className="size-[15px]">
          <path stroke="#fff" strokeWidth="2" d="M1 5H11V15H1Z" />
          <path stroke="#8c8c8c" strokeWidth="2" d="M4 1H15V12" />
        </Svg>
      </button>
      <button type="button" aria-label="Close" className="flex size-10 items-center justify-center rounded-full bg-[#373737]">
        <Svg box="0 0 16 16" className="size-[15px]"><path stroke="#fff" strokeWidth="2.400" d="M0.500 0.500L15.500 15.500M15.500 0.500L0.500 15.500" /></Svg>
      </button>
    </div>
  </div>
);

const MENUS = ["File", "Edit", "ConfBackup", "Wizards", "Terminal", "Developer", "Help"];

export default function App() {
  return (
    <div className="flex h-screen flex-col overflow-hidden bg-[#282828] font-['Roboto',sans-serif] text-[29px] leading-[34px] text-[#d9d9d9]">
      <TopBar />
      <TitleBar />
      <div role="menubar" className="flex h-[43px] shrink-0 gap-[25px] border-b-2 border-[#222] pl-[19px]">
        {MENUS.map((m) => (
          <button key={m} type="button" role="menuitem" className="h-10">{m}</button>
        ))}
      </div>
      <div className="flex min-h-0 grow">
        <div className="flex min-w-0 grow flex-col">
          <div className="flex min-h-0 grow">
            <Sidebar />
            <main className="flex min-w-0 grow flex-col pr-3.5 pt-[11px]">
              <div role="tablist" className="relative z-10 -mb-0.5 flex items-end gap-[5px] pl-[3px]">
                {TABS.map((t) => (
                  <Tab key={t} label={t} selected={t === "RPM"} />
                ))}
              </div>
              <section className="flex grow flex-col border-r-2 border-b-2 border-l border-[#1b1b1b]">
                <div className="grow border-2 border-[#555] bg-[#3d3d3d] pt-[17px] pr-[15px] pb-[13px] pl-[17px]">
                  <div className="h-full border border-[#1c1c1c] bg-[#303030]">
                    <FormRow id="max-erpm" label="Max ERPM">
                      <Field id="max-erpm" name="Max ERPM" value="150000,00" className="my-[3px] ml-0.5 grow" />
                    </FormRow>
                    <FormRow id="max-erpm-rev" label="Max ERPM Reverse">
                      <Field id="max-erpm-rev" name="Max ERPM Reverse" value="-150000,00" className="my-[3px] ml-0.5 grow" />
                    </FormRow>
                    <FormRow id="erpm-limit" label="ERPM Limit Start">
                      <Field id="erpm-limit" name="ERPM Limit Start" value="80 %" className="my-[3px] mr-0.5 ml-0.5 w-[276px] shrink-0" />
                      <LimitBar />
                    </FormRow>
                  </div>
                </div>
              </section>
            </main>
          </div>
          <Controls />
        </div>
        <ToolBar />
      </div>
      <footer className="h-[45px] shrink-0 pr-[2px] text-right leading-[44px]">Connected (serial) to ttyACM0</footer>
    </div>
  );
}
